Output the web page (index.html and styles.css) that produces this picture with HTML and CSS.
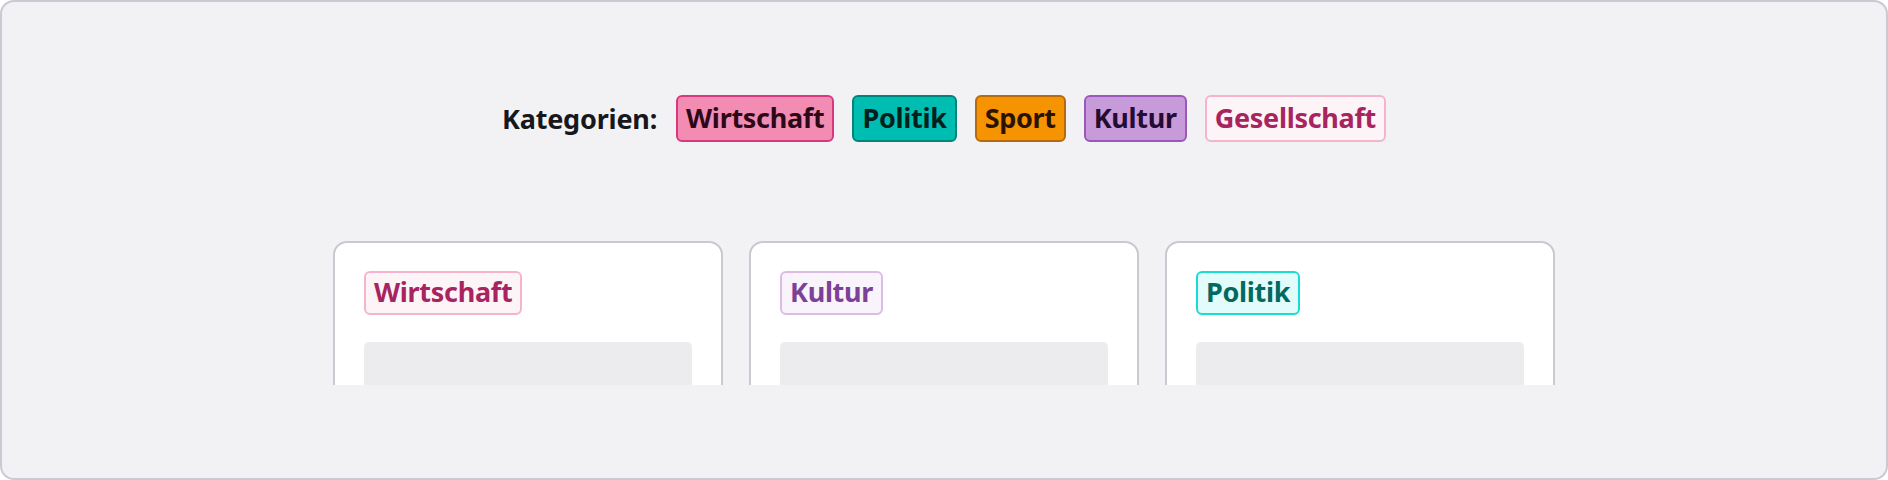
FILE: index.html
```html
<!DOCTYPE html>
<html lang="de">
<head>
<meta charset="utf-8">
<title>Kategorien</title>
<link rel="stylesheet" href="styles.css">
</head>
<body>
<div class="frame">
  <div class="legend">
    <span class="legend-label">Kategorien:</span>
    <span class="chip chip-wirtschaft-solid">Wirtschaft</span>
    <span class="chip chip-politik-solid">Politik</span>
    <span class="chip chip-sport-solid">Sport</span>
    <span class="chip chip-kultur-solid">Kultur</span>
    <span class="chip chip-gesellschaft">Gesellschaft</span>
  </div>
  <div class="cards-clip">
    <div class="cards">
      <div class="card">
        <span class="chip chip-wirtschaft">Wirtschaft</span>
        <div class="placeholder"></div>
      </div>
      <div class="card">
        <span class="chip chip-kultur">Kultur</span>
        <div class="placeholder"></div>
      </div>
      <div class="card">
        <span class="chip chip-politik">Politik</span>
        <div class="placeholder"></div>
      </div>
    </div>
  </div>
</div>
</body>
</html>
```

FILE: styles.css
```css
* { box-sizing: border-box; }
html, body { margin: 0; padding: 0; background: #ffffff; }
body { font-family: "Noto Sans", "Open Sans", sans-serif; }

.frame {
  width: 1888px;
  height: 480px;
  background: #f2f2f5;
  border: 2px solid #c9cbd2;
  border-radius: 14px;
  padding-top: 93px;
  display: flex;
  flex-direction: column;
  align-items: center;
}

.legend {
  display: flex;
  align-items: center;
  gap: 18px;
}

.legend-label {
  font-weight: 700;
  font-size: 27px;
  letter-spacing: -0.2px;
  color: #17171c;
  margin-right: 1px;
}

.chip {
  display: inline-flex;
  align-items: center;
  height: 47px;
  padding: 0 8px 2px;
  border: 2px solid transparent;
  border-radius: 6px;
  font-weight: 700;
  font-size: 27px;
  letter-spacing: -0.3px;
  line-height: 1;
  white-space: nowrap;
}

.chip-wirtschaft-solid { background: #f28cb2; border-color: #d8387f; color: #2c0818; }
.chip-politik-solid { background: #00bdb1; border-color: #00847b; color: #00201d; }
.chip-sport-solid { background: #f59400; border-color: #b56a12; color: #2b1300; }
.chip-kultur-solid { background: #c79bd9; border-color: #9c57bb; color: #250c33; }
.chip-gesellschaft { background: #fdf4f8; border-color: #f6b3cb; color: #a8245f; }

.chip-wirtschaft { background: #fdf4f8; border-color: #f6b3cb; color: #a8245f; }
.chip-kultur { background: #f9f3fb; border-color: #dcbbe7; color: #7c4197; }
.chip-politik { background: #e1fcfb; border-color: #19dcd2; color: #006a61; }

.cards-clip {
  margin-top: 99px;
  height: 144px;
  overflow: hidden;
}

.cards {
  display: flex;
  gap: 26px;
}

.card {
  width: 390px;
  height: 260px;
  background: #ffffff;
  border: 2px solid #c8cad1;
  border-radius: 14px;
  padding: 28px 29px;
  display: flex;
  flex-direction: column;
  align-items: flex-start;
}

.placeholder {
  margin-top: 27px;
  width: 100%;
  height: 140px;
  background: #ececef;
  border-radius: 5px;
}
```
